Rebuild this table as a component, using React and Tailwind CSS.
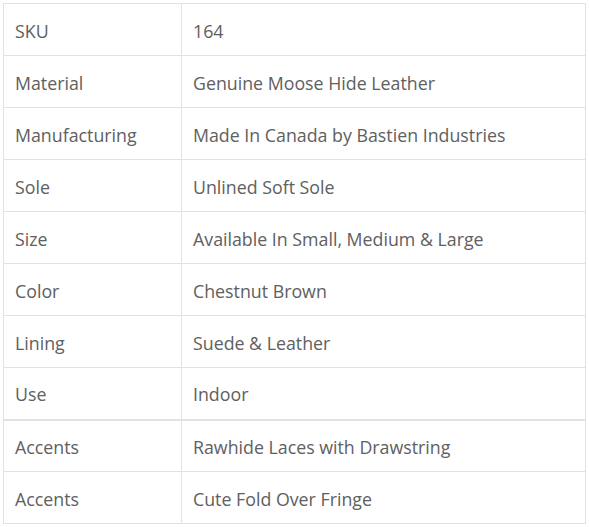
import React from 'react';

const rows = [
  ['SKU', '164'],
  ['Material', 'Genuine Moose Hide Leather'],
  ['Manufacturing', 'Made In Canada by Bastien Industries'],
  ['Sole', 'Unlined Soft Sole'],
  ['Size', 'Available In Small, Medium & Large'],
  ['Color', 'Chestnut Brown'],
  ['Lining', 'Suede & Leather'],
  ['Use', 'Indoor'],
  ['Accents', 'Rawhide Laces with Drawstring'],
  ['Accents', 'Cute Fold Over Fringe'],
];

export default function App() {
  return (
    <div className="min-h-screen bg-white pt-[3px] pl-[3px] font-['Open_Sans',sans-serif] text-[17.8px] text-[#606060]">
      <table className="w-[583px] border-collapse">
        <tbody>
          {rows.map(([label, value], i) => (
            <tr key={i} className={i === 8 ? 'border-t-2 border-[#e2e2e2]' : ''}>
              <td className="w-[178px] h-[52px] border border-[#e2e2e2] pl-[11px] pt-[3px] align-middle">{label}</td>
              <td className="h-[52px] border border-[#e2e2e2] pl-[11px] pt-[3px] align-middle">{value}</td>
            </tr>
          ))}
        </tbody>
      </table>
    </div>
  );
}
